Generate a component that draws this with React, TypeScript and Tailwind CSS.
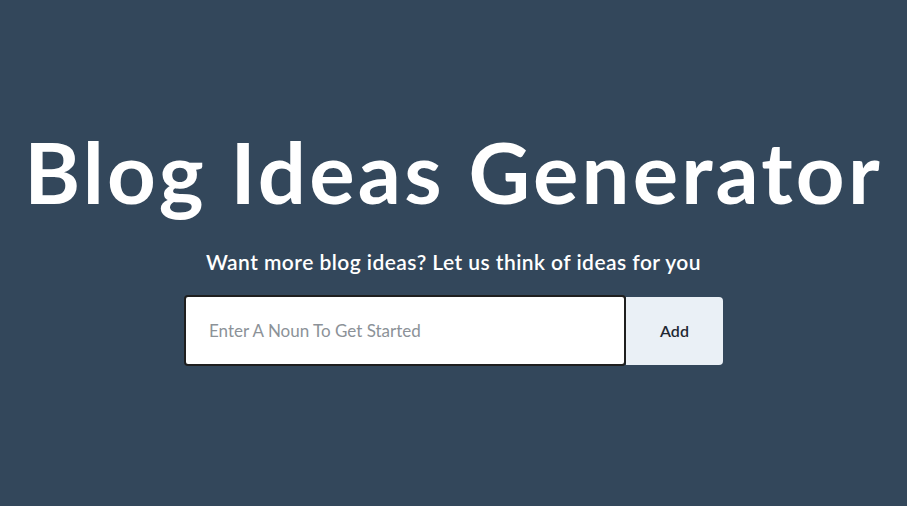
import React, { useState } from 'react';

export default function App() {
    const [noun, setNoun] = useState('');

    return (
        <div className="min-h-screen w-full bg-[#33475b] flex flex-col items-center font-['Lato',sans-serif]">
            <h1 className="mt-[129px] text-[85px] leading-none font-bold text-white tracking-[3.2px]">
                Blog Ideas Generator
            </h1>
            <p className="mt-[35px] text-[21px] leading-[25px] font-semibold text-white tracking-[0.45px]">
                Want more blog ideas? Let us think of ideas for you
            </p>
            <div className="mt-[21px] flex items-center">
                <input
                    type="text"
                    value={noun}
                    onChange={(e) => setNoun(e.target.value)}
                    placeholder="Enter A Noun To Get Started"
                    className="w-[442px] h-[71px] px-[23px] bg-white border-2 border-[#1f1f1f] rounded-[4px] text-[17px] text-[#33475b] placeholder:text-[#8c9298] outline-none"
                />
                <button className="w-[97px] h-[68px] bg-[#eaf0f6] rounded-r-[4px] text-[16px] font-semibold text-[#1f2933]">
                    Add
                </button>
            </div>
        </div>
    );
}
